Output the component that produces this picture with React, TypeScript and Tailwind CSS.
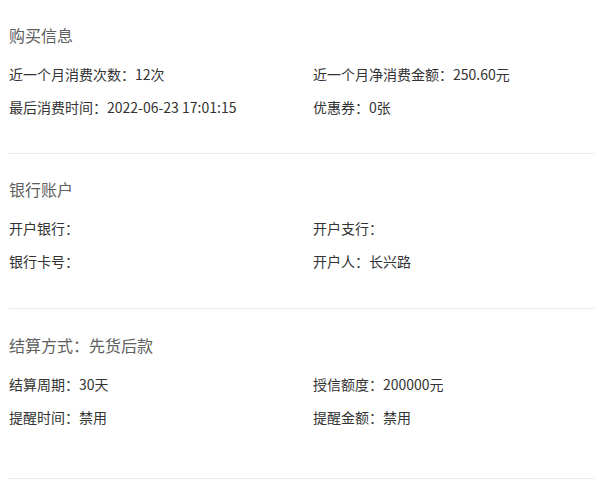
import React from "react";

const font = { fontFamily: '"Noto Sans CJK SC", "Liberation Sans", sans-serif' };

function Row({ left, right }: { left: string; right: string }) {
  return (
    <div className="grid grid-cols-[304px_1fr] text-[14px] leading-[20px] text-[#333]">
      <div>{left}</div>
      <div>{right}</div>
    </div>
  );
}

function Section({
  title,
  rows,
  cls,
}: {
  title: string;
  rows: [string, string][];
  cls: string;
}) {
  return (
    <div className={`border-b border-[#ebebeb] ${cls}`}>
      <div className="text-[16px] leading-[24px] text-[#606060]">{title}</div>
      <div className="mt-[17px] flex flex-col gap-[13px]">
        {rows.map((r, i) => (
          <Row key={i} left={r[0]} right={r[1]} />
        ))}
      </div>
    </div>
  );
}

export default function App() {
  return (
    <div className="w-[595px] h-[486px] bg-white pl-[9px]" style={font}>
      <Section
        title="购买信息"
        cls="pt-[23px] pb-[36px]"
        rows={[
          ["近一个月消费次数：12次", "近一个月净消费金额：250.60元"],
          ["最后消费时间：2022-06-23 17:01:15", "优惠券：0张"],
        ]}
      />
      <Section
        title="银行账户"
        cls="pt-[23px] pb-[37px]"
        rows={[
          ["开户银行：", "开户支行："],
          ["银行卡号：", "开户人：长兴路"],
        ]}
      />
      <Section
        title="结算方式：先货后款"
        cls="pt-[24px] pb-[51px]"
        rows={[
          ["结算周期：30天", "授信额度：200000元"],
          ["提醒时间：禁用", "提醒金额：禁用"],
        ]}
      />
    </div>
  );
}
